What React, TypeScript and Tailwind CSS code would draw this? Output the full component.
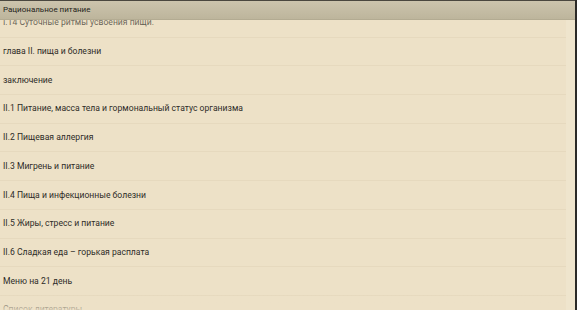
const items = [
  "I.14 Суточные ритмы усвоения пищи.",
  "глава II. пища и болезни",
  "заключение",
  "II.1 Питание, масса тела и гормональный статус организма",
  "II.2 Пищевая аллергия",
  "II.3 Мигрень и питание",
  "II.4 Пища и инфекционные болезни",
  "II.5 Жиры, стресс и питание",
  "II.6 Сладкая еда – горькая расплата",
  "Меню на 21 день",
  "Список литературы",
];

export default function App() {
  return (
    <div
      className="flex h-[310px] w-[577px] overflow-hidden bg-[#ede1c7]"
      style={{ fontFamily: "Roboto, 'Noto Sans', sans-serif" }}
    >
      <div className="flex min-w-0 flex-1 flex-col">
        {/* Title bar */}
        <div className="h-px bg-[#4a473f]" />
        <div className="flex h-[19px] items-center border-b border-[#b3ab92] bg-gradient-to-b from-[#ccc4ad] to-[#bdb59c] px-[3px] text-[8px] text-[#1f1e1a]">
          Рациональное питание
        </div>

        {/* List */}
        <div className="relative flex-1 overflow-hidden">
          <div className="-mt-[11px] pr-[9px]">
            {items.map((t) => (
              <div
                key={t}
                className="flex h-[28.7px] items-center border-b border-[#e6d9be] px-[3px] text-[8.6px] text-[#2e2c27]"
              >
                {t}
              </div>
            ))}
          </div>
          <div className="pointer-events-none absolute inset-x-0 top-0 h-[14px] bg-gradient-to-b from-[#ede1c7] to-transparent opacity-40" />
          <div className="pointer-events-none absolute inset-x-0 bottom-0 h-[16px] bg-gradient-to-t from-[#ede1c7] to-transparent opacity-80" />
          <div className="pointer-events-none absolute inset-y-0 right-0 w-[9px] bg-[#efe5cd]" />
        </div>
      </div>
      <div className="w-[2px] bg-[#2b2a27]" />
    </div>
  );
}
